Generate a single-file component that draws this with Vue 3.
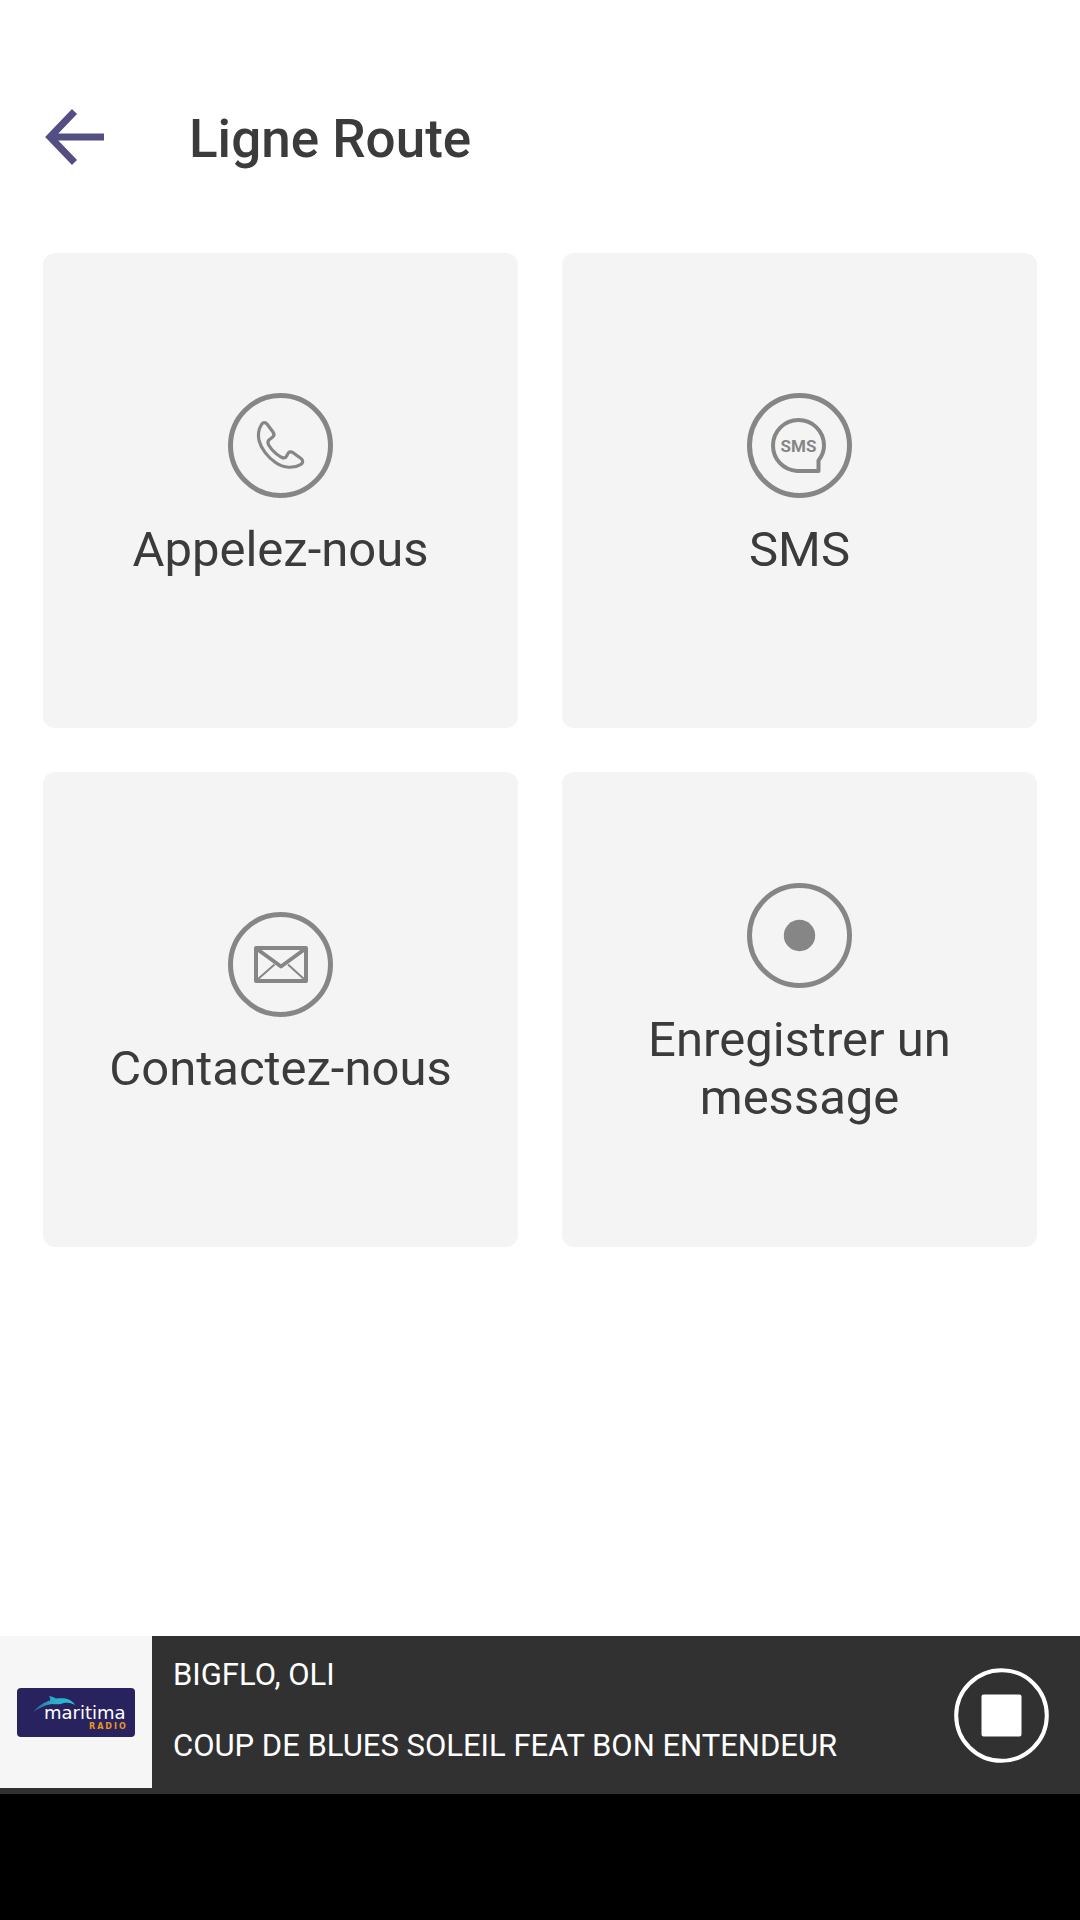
<script setup>
import { ref } from 'vue'

const artist = ref('BIGFLO, OLI')
const track = ref('COUP DE BLUES SOLEIL FEAT BON ENTENDEUR')
const playing = ref(true)

const actions = [
  { id: 'call', label: 'Appelez-nous' },
  { id: 'sms', label: 'SMS' },
  { id: 'mail', label: 'Contactez-nous' },
  { id: 'record', label: 'Enregistrer un message' },
]

const togglePlay = () => {
  playing.value = !playing.value
}
</script>

<template>
  <div class="page">
    <header class="top-bar">
      <button type="button" class="back" aria-label="Retour">
        <svg viewBox="0 0 60 60" width="60" height="60">
          <path d="M29.5 4.5L5 30l24.500 25.500M7 30h52" fill="none" stroke="#544f82" stroke-width="7" />
        </svg>
      </button>
      <h1>Ligne Route</h1>
    </header>

    <main class="actions">
      <button v-for="action in actions" :key="action.id" type="button" class="card">
        <svg class="card-icon" viewBox="0 0 105 105" fill="none" stroke="#868686">
          <circle cx="52.500" cy="52.500" r="50" stroke-width="5" />
          <path
            v-if="action.id === 'call'"
            d="M33.500 31.500C34.800 29 37.500 29.200 39 31L45 39C46.500 41 46 43 44.500 44.200L41.500 46.500C39.500 48 39.800 50.500 41 52.500C44 57.500 48.500 61.500 53.500 64.300C55.500 65.300 57.500 65 58.500 63.200L60 60.500C61 58.700 63 58.300 64.800 59.500L73 65.500C75.300 67.200 75.200 70 73 71.300C66 75.500 56 75.500 47.500 69.500C40 64.500 33 55.500 31 47.500C29.800 42 30.700 36 33.500 31.500Z"
            stroke-width="3.200"
            stroke-linejoin="round"
          />
          <template v-else-if="action.id === 'sms'">
            <path
              d="M71.500 78H50C36 77 26 66 26 52.500C26 38 37.500 27 51.500 27C65.500 27 77 38 77 52.500C77 58 75 63 71.500 67.500Z"
              stroke-width="4"
              stroke-linejoin="round"
            />
            <text x="51.500" y="59" text-anchor="middle" class="sms-text">SMS</text>
          </template>
          <template v-else-if="action.id === 'mail'">
            <path d="M29.500 67.500L46.500 52.500M76.500 67.500L60 52.500" stroke-width="2" />
            <path d="M28 36H78V69H28ZM29 37L53 54.500L77 37" stroke-width="4" stroke-linejoin="round" />
          </template>
          <circle v-else cx="52.500" cy="52.500" r="15.700" fill="#868686" stroke="none" />
        </svg>
        <span class="card-label">{{ action.label }}</span>
      </button>
    </main>

    <section class="player">
      <div class="cover">
        <svg viewBox="0 0 118 49" width="118" height="49" role="img" aria-label="Maritima Radio">
          <defs>
            <linearGradient id="dolphin" x1="0" x2="1">
              <stop offset="0" stop-color="#27608f" />
              <stop offset="0.450" stop-color="#2fa9c8" />
              <stop offset="1" stop-color="#25c3d4" />
            </linearGradient>
          </defs>
          <rect width="118" height="49" rx="4" fill="#28235f" />
          <path
            d="M16 24C21 18.500 27 14 33 12.500C33.500 11 33 9.500 32 8C35 8.500 37 9.500 39 10.500C47 9.500 55 11 58 17C54 14.800 50 14.500 47 15C44 16.500 39 16.500 35 16C28 17 22 20 16 24Z"
            fill="url(#dolphin)"
          />
          <text x="27" y="31" class="logo-name">maritima</text>
          <text x="72" y="41" class="logo-sub">RADIO</text>
        </svg>
      </div>
      <div class="now-playing">
        <p>{{ artist }}</p>
        <p>{{ track }}</p>
      </div>
      <button type="button" class="stop" :aria-label="playing ? 'Arrêter' : 'Lire'" @click="togglePlay">
        <svg viewBox="0 0 95 95" width="95" height="95">
          <circle cx="47.500" cy="47.500" r="45.300" fill="none" stroke="#fff" stroke-width="4" />
          <rect v-if="playing" x="27.500" y="26.500" width="40" height="42" rx="2" fill="#fff" />
          <path v-else d="M36 26l34 21.500L36 69z" fill="#fff" />
        </svg>
      </button>
    </section>
    <div class="system-nav"></div>
  </div>
</template>

<style>
body {
  margin: 0;
  background: #fff;
}
</style>

<style scoped>
.page {
  display: flex;
  flex-direction: column;
  min-height: 100vh;
  font-family: Roboto, "Liberation Sans", sans-serif;
  color: #3b3b3b;
}

button {
  padding: 0;
  border: none;
  background: none;
  font: inherit;
  color: inherit;
  cursor: pointer;
}

svg {
  display: block;
}

.top-bar {
  display: flex;
  align-items: flex-start;
  gap: 84px;
  padding: 107px 45px 81px;
}

h1 {
  margin: 0;
  font-size: 53px;
  font-weight: 500;
  line-height: 65px;
}

.actions {
  flex: 1;
  display: grid;
  grid-template-columns: 1fr 1fr;
  align-content: start;
  gap: 44px;
  padding: 0 43px 44px;
}

.card {
  display: flex;
  flex-direction: column;
  align-items: center;
  justify-content: center;
  gap: 23px;
  aspect-ratio: 1;
  box-sizing: border-box;
  padding: 0 44px 9px;
  border-radius: 12px;
  background: #f4f4f4;
}

.card-icon {
  width: 105px;
  height: 105px;
}

.card-label {
  font-size: 49px;
  line-height: 58px;
  text-align: center;
}

.sms-text {
  font-family: Roboto, sans-serif;
  font-size: 17px;
  font-weight: 700;
  fill: #868686;
  stroke: none;
}

.player {
  display: flex;
  align-items: center;
  background: #313131;
  color: #fff;
}

.cover {
  display: flex;
  align-items: center;
  justify-content: center;
  width: 152px;
  height: 152px;
  margin-bottom: 6px;
  background: #f6f6f6;
}

.now-playing {
  flex: 1;
  display: flex;
  flex-direction: column;
  gap: 33px;
  padding: 0 21px 10px;
}

.now-playing p {
  margin: 0;
  font-size: 31px;
  line-height: 38px;
}

.stop {
  margin-right: 31px;
}

.logo-name {
  font-family: "DejaVu Sans", sans-serif;
  font-size: 18px;
  font-weight: 400;
  fill: #fff;
}

.logo-sub {
  font-family: "DejaVu Sans", sans-serif;
  font-size: 8px;
  font-weight: 700;
  letter-spacing: 2px;
  fill: #e8961e;
}

.system-nav {
  height: 126px;
  background: #000;
}
</style>
